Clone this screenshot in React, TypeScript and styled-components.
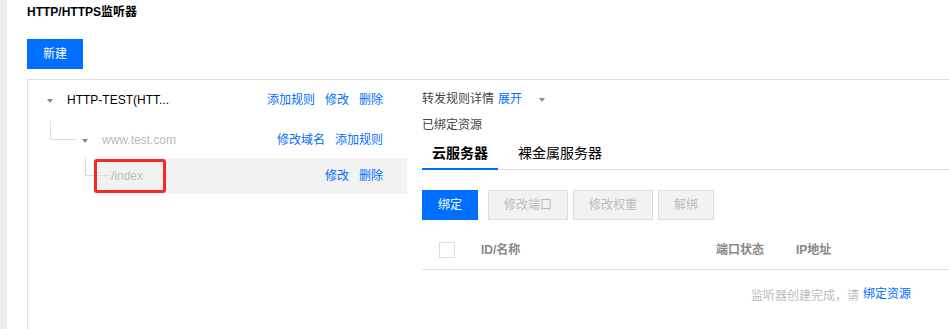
import React from "react";
import styled, { createGlobalStyle } from "styled-components";

const GlobalStyle = createGlobalStyle`
  html, body {
    margin: 0;
    padding: 0;
    overflow: hidden;
    background: #fff;
  }
  body {
    font-family: "Liberation Sans", "Noto Sans CJK SC", sans-serif;
    font-size: 12px;
    color: #333;
  }
`;

const BLUE = "#006eff";

const Page = styled.div`
  display: flex;
  width: 949px;
  height: 329px;
  overflow: hidden;
`;

const SideStrip = styled.div`
  width: 7px;
  flex: none;
  background: #ececec;
`;

const Main = styled.div`
  flex: 1;
  display: flex;
  flex-direction: column;
  align-items: flex-start;
  padding: 2px 0 0 20px;
  min-width: 0;
`;

const Title = styled.h2`
  margin: 0;
  font-size: 12px;
  line-height: 20px;
  font-weight: bold;
  color: #000;
`;

const Button = styled.button<{ $primary?: boolean }>`
  box-sizing: border-box;
  height: 30px;
  padding: 0 15px;
  font-family: inherit;
  font-size: 12px;
  line-height: 28px;
  border: 1px solid ${(p) => (p.$primary ? BLUE : "#ddd")};
  background: ${(p) => (p.$primary ? BLUE : "#f2f2f2")};
  color: ${(p) => (p.$primary ? "#fff" : "#bbb")};
  cursor: ${(p) => (p.$primary ? "pointer" : "not-allowed")};
  white-space: nowrap;
`;

const NewButton = styled(Button)`
  margin-top: 17px;
`;

const Box = styled.div`
  margin-top: 10px;
  align-self: stretch;
  flex: 1;
  display: flex;
  border-top: 1px solid #ddd;
  border-left: 1px solid #ddd;
`;

const TreePanel = styled.div`
  width: 379px;
  flex: none;
  padding-top: 2px;
  display: flex;
  flex-direction: column;
`;

const Row = styled.div<{ $indent: number; $band?: number; $gapTop?: number }>`
  position: relative;
  height: 36px;
  display: flex;
  align-items: center;
  padding-left: ${(p) => p.$indent}px;
  padding-right: 24px;
  margin-top: ${(p) => p.$gapTop ?? 0}px;
  background: ${(p) =>
    p.$band !== undefined
      ? `linear-gradient(to right, transparent ${p.$band}px, #f2f2f2 ${p.$band}px)`
      : "transparent"};
`;

const Connector = styled.span<{ $width: number }>`
  align-self: flex-start;
  box-sizing: border-box;
  margin-top: -1px;
  width: ${(p) => p.$width}px;
  height: 19px;
  border-left: 1px solid #ddd;
  border-bottom: 1px solid #ddd;
  flex: none;
`;

const Switcher = styled.span<{ $before?: number }>`
  flex: none;
  width: 0;
  height: 0;
  margin-left: ${(p) => p.$before ?? 0}px;
  margin-right: 14px;
  margin-top: 2px;
  border-left: 3.5px solid transparent;
  border-right: 3.5px solid transparent;
  border-top: 4px solid #888;
`;

const NodeLabel = styled.span<{ $muted?: boolean; $gap?: number }>`
  margin-left: ${(p) => p.$gap ?? 0}px;
  color: ${(p) => (p.$muted ? "#bbb" : "#000")};
  line-height: 20px;
  white-space: nowrap;
`;

const Actions = styled.span`
  margin-left: auto;
  display: flex;
  gap: 10px;
`;

const Link = styled.a`
  color: ${BLUE};
  text-decoration: none;
  line-height: 20px;
  cursor: pointer;
  white-space: nowrap;
`;

const Highlight = styled.span`
  position: absolute;
  left: 66px;
  top: 1px;
  width: 72px;
  height: 34px;
  box-sizing: border-box;
  border: 3px solid #f52828;
  border-radius: 3px;
  pointer-events: none;
`;

const DetailPanel = styled.div`
  flex: 1;
  min-width: 0;
  padding: 9px 0 0 15px;
  display: flex;
  flex-direction: column;
`;

const InfoLine = styled.div<{ $top?: number }>`
  display: flex;
  align-items: center;
  line-height: 20px;
  color: #444;
  margin-top: ${(p) => p.$top ?? 0}px;
`;

const Expand = styled(Link)`
  margin-left: 4px;
`;

const Caret = styled.span`
  width: 0;
  height: 0;
  margin-left: 17px;
  margin-top: 1px;
  border-left: 3.5px solid transparent;
  border-right: 3.5px solid transparent;
  border-top: 4px solid #888;
`;

const TabBar = styled.div`
  display: flex;
  gap: 10px;
  border-bottom: 1px solid #ddd;
`;

const Tab = styled.div<{ $active?: boolean }>`
  box-sizing: border-box;
  height: 35px;
  margin-bottom: -1px;
  padding: 0 10px;
  display: flex;
  align-items: center;
  font-size: 14px;
  color: #000;
  font-weight: ${(p) => (p.$active ? "bold" : "normal")};
  border-bottom: 2px solid ${(p) => (p.$active ? BLUE : "transparent")};
  white-space: nowrap;
  cursor: pointer;
`;

const Toolbar = styled.div`
  margin-top: 20px;
  display: flex;
  gap: 5px;
  & > :first-child {
    margin-right: 5px;
  }
`;

const TableHead = styled.div`
  margin-top: 10px;
  height: 40px;
  display: grid;
  grid-template-columns: 59px 235px 80px 1fr;
  align-items: center;
  border-bottom: 1px solid #ddd;
  font-weight: bold;
  color: #888;
  box-sizing: border-box;
`;

const CheckCell = styled.div`
  padding-left: 17px;
  display: flex;
`;

const Checkbox = styled.span`
  width: 16px;
  height: 16px;
  box-sizing: border-box;
  border: 1px solid #ddd;
  background: #fff;
`;

const HeadCell = styled.div`
  white-space: nowrap;
  line-height: 20px;
`;

const EmptyRow = styled.div`
  height: 48px;
  display: flex;
  align-items: center;
  justify-content: flex-end;
  padding-right: 38px;
  color: #bbb;
  white-space: nowrap;
`;

const EmptyLink = styled(Link)`
  margin-left: 4px;
`;

export default function App() {
  return (
    <>
      <GlobalStyle />
      <Page>
        <SideStrip />
        <Main>
          <Title>HTTP/HTTPS监听器</Title>
          <NewButton $primary>新建</NewButton>
          <Box>
            <TreePanel>
              <Row $indent={19}>
                <Switcher />
                <NodeLabel>HTTP-TEST(HTT...</NodeLabel>
                <Actions>
                  <Link>添加规则</Link>
                  <Link>修改</Link>
                  <Link>删除</Link>
                </Actions>
              </Row>
              <Row $indent={22} $gapTop={4}>
                <Connector $width={26} />
                <Switcher $before={6} />
                <NodeLabel $muted>www.test.com</NodeLabel>
                <Actions>
                  <Link>修改域名</Link>
                  <Link>添加规则</Link>
                </Actions>
              </Row>
              <Row $indent={57} $band={66}>
                <Connector $width={25} />
                <NodeLabel $muted $gap={1}>/index</NodeLabel>
                <Actions>
                  <Link>修改</Link>
                  <Link>删除</Link>
                </Actions>
                <Highlight />
              </Row>
            </TreePanel>
            <DetailPanel>
              <InfoLine>
                转发规则详情
                <Expand>展开</Expand>
                <Caret />
              </InfoLine>
              <InfoLine $top={6}>已绑定资源</InfoLine>
              <TabBar>
                <Tab $active>云服务器</Tab>
                <Tab>裸金属服务器</Tab>
              </TabBar>
              <Toolbar>
                <Button $primary>绑定</Button>
                <Button disabled>修改端口</Button>
                <Button disabled>修改权重</Button>
                <Button disabled>解绑</Button>
              </Toolbar>
              <TableHead>
                <CheckCell>
                  <Checkbox />
                </CheckCell>
                <HeadCell>ID/名称</HeadCell>
                <HeadCell>端口状态</HeadCell>
                <HeadCell>IP地址</HeadCell>
              </TableHead>
              <EmptyRow>
                监听器创建完成，请
                <EmptyLink>绑定资源</EmptyLink>
              </EmptyRow>
            </DetailPanel>
          </Box>
        </Main>
      </Page>
    </>
  );
}
